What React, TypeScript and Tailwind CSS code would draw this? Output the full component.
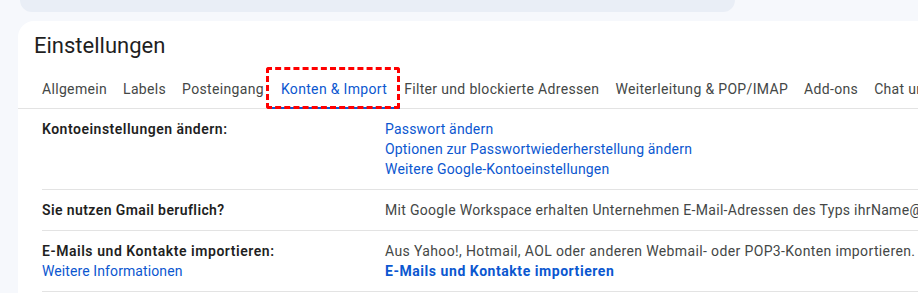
import React from "react";

const tabs = [
  "Allgemein",
  "Labels",
  "Posteingang",
  "Konten & Import",
  "Filter und blockierte Adressen",
  "Weiterleitung & POP/IMAP",
  "Add-ons",
  "Chat und Meet",
];

export default function App() {
  return (
    <div
      className="w-[918px] h-[293px] overflow-hidden bg-[#f6f8fc] flex flex-col"
      style={{ fontFamily: "Roboto, 'Noto Sans', sans-serif" }}
    >
      <div className="h-[12px] ml-[20px] w-[715px] shrink-0 bg-[#e9eef6] rounded-b-[16px]" />
      <div className="mt-[9px] ml-[18px] flex-1 bg-white rounded-tl-[16px] flex flex-col min-w-0">
        <div className="pl-[16px] pt-[10px] h-[45px] text-[22px] leading-[30px] text-[#1f1f1f]">
          Einstellungen
        </div>
        <div className="flex items-end h-[43px] border-b border-[#e3e3e3] pl-[24px] gap-[16px] whitespace-nowrap text-[14px] tracking-[0.33px] text-[#444746]">
          {tabs.map((t) =>
            t === "Konten & Import" ? (
              <div key={t} className="relative h-full flex items-center px-[1px] text-[#0b57d0]">
                <span className="pt-[5px]">{t}</span>
                <div className="absolute left-[-12px] right-[-12px] bottom-[-1px] h-[2px] bg-[#0b57d0]" />
                <div className="absolute left-[-14px] right-[-12px] top-[1px] bottom-[-1px] border-[3px] border-dashed border-[#ff0000] rounded-[3px]" />
              </div>
            ) : (
              <div key={t} className="h-full flex items-center">
                <span className="pt-[5px]">{t}</span>
              </div>
            )
          )}
        </div>
        <div className="pl-[24px] flex flex-col text-[14px] leading-[20px]">
          <div className="flex py-[10px] border-b border-[#e3e3e3]">
            <div className="w-[343px] shrink-0 font-semibold tracking-[0.5px] text-[#1f1f1f]">Kontoeinstellungen ändern:</div>
            <div className="flex flex-col tracking-[0.18px] text-[#0b57d0]">
              <span>Passwort ändern</span>
              <span>Optionen zur Passwortwiederherstellung ändern</span>
              <span>Weitere Google-Kontoeinstellungen</span>
            </div>
          </div>
          <div className="flex py-[10px] border-b border-[#e3e3e3]">
            <div className="w-[343px] shrink-0 font-semibold tracking-[0.4px] text-[#1f1f1f]">Sie nutzen Gmail beruflich?</div>
            <div className="whitespace-nowrap tracking-[0.3px] text-[#444746]">
              Mit Google Workspace erhalten Unternehmen E-Mail-Adressen des Typs ihrName@ebeispiel.de
            </div>
          </div>
          <div className="flex py-[10px] border-b border-[#e3e3e3]">
            <div className="w-[343px] shrink-0 flex flex-col">
              <span className="font-semibold tracking-[0.55px] text-[#1f1f1f]">E-Mails und Kontakte importieren:</span>
              <span className="tracking-[0.1px] text-[#0b57d0]">Weitere Informationen</span>
            </div>
            <div className="flex flex-col whitespace-nowrap">
              <span className="tracking-[0.37px] text-[#444746]">Aus Yahoo!, Hotmail, AOL oder anderen Webmail- oder POP3-Konten importieren.</span>
              <span className="font-bold tracking-[0.55px] text-[#0b57d0]">E-Mails und Kontakte importieren</span>
            </div>
          </div>
        </div>
      </div>
    </div>
  );
}
